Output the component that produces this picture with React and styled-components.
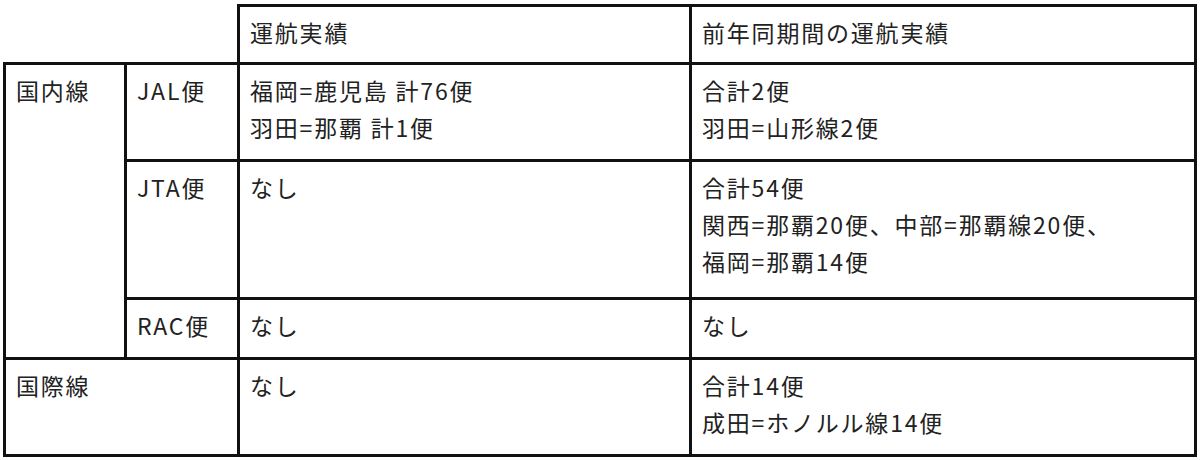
import styled, { createGlobalStyle } from 'styled-components';

const GlobalStyle = createGlobalStyle`
    body {
        margin: 0;
        background: #fff;
    }
`;

const Page = styled.div`
    padding: 4px 0 0 3px;
    font-family: "Noto Sans CJK JP", "Noto Sans", sans-serif;
    color: #222;
`;

const Table = styled.div`
    display: grid;
    grid-template-columns: 124px 113px 452px 505px;
    grid-template-rows: 61px 97px 138px 60px 97px;
`;

const Cell = styled.div`
    box-sizing: border-box;
    padding: 7px 10px;
    font-size: 23px;
    line-height: 37px;
    letter-spacing: 1.8px;
    border-right: 3px solid #111;
    border-bottom: 3px solid #111;
    border-left: ${(p) => (p.$left ? '3px solid #111' : 'none')};
    border-top: ${(p) => (p.$top ? '3px solid #111' : 'none')};
    grid-column: ${(p) => p.$col || 'auto'};
    grid-row: ${(p) => p.$row || 'auto'};
`;

const Corner = styled.div`
    grid-column: 1 / 3;
    border-right: 3px solid #111;
    border-bottom: 3px solid #111;
`;

const Line = styled.div`
    white-space: nowrap;
`;

export default function App() {
    return (
        <Page>
            <GlobalStyle />
            <Table>
                <Corner />
                <Cell $top>運航実績</Cell>
                <Cell $top>前年同期間の運航実績</Cell>

                <Cell $left $row="2 / 5">国内線</Cell>
                <Cell>JAL便</Cell>
                <Cell>
                    <Line>福岡=鹿児島 計76便</Line>
                    <Line>羽田=那覇 計1便</Line>
                </Cell>
                <Cell>
                    <Line>合計2便</Line>
                    <Line>羽田=山形線2便</Line>
                </Cell>

                <Cell>JTA便</Cell>
                <Cell>なし</Cell>
                <Cell>
                    <Line>合計54便</Line>
                    <Line>関西=那覇20便、中部=那覇線20便、</Line>
                    <Line>福岡=那覇14便</Line>
                </Cell>

                <Cell>RAC便</Cell>
                <Cell>なし</Cell>
                <Cell>なし</Cell>

                <Cell $left $col="1 / 3">国際線</Cell>
                <Cell>なし</Cell>
                <Cell>
                    <Line>合計14便</Line>
                    <Line>成田=ホノルル線14便</Line>
                </Cell>
            </Table>
        </Page>
    );
}
